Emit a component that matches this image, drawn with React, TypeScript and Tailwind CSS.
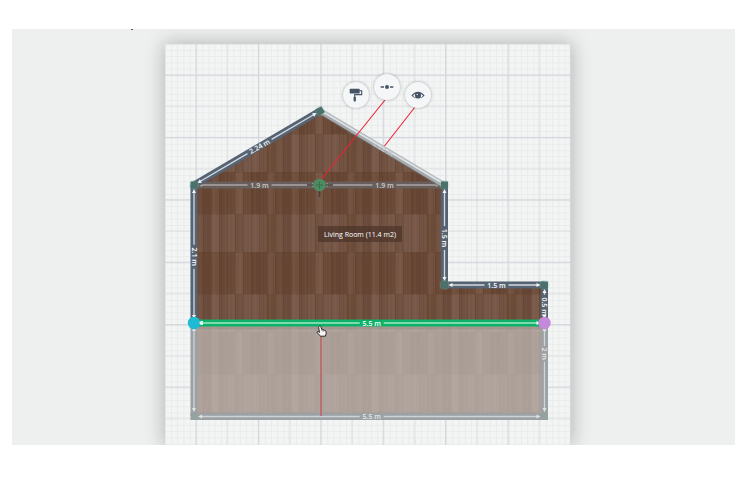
import React from "react";

const FONT = "font-['Open_Sans','Noto_Sans',sans-serif]";

type Tone = "solid" | "ghost" | "inner" | "green";

const wallColor: Record<Tone, string> = {
  solid: "#566373",
  ghost: "#9ba1a5",
  inner: "#685f5c",
  green: "#0bb267",
};

const lineColor: Record<Tone, string> = {
  solid: "#d5dadf",
  ghost: "#d0d4d6",
  inner: "#aaa5a3",
  green: "#a5e6c6",
};

interface WallProps {
  from: [number, number];
  to: [number, number];
  label?: string;
  tone?: Tone;
  at?: number;
}

// A wall with its dimension line; the line breaks around the length label.
function Wall({ from, to, label, tone = "solid", at = 0.5 }: WallProps) {
  const dx = to[0] - from[0];
  const dy = to[1] - from[1];
  const length = Math.hypot(dx, dy);
  const angle = (Math.atan2(dy, dx) * 180) / Math.PI;
  const middle = length * at;
  const gap = label ? label.length * 2 + 2 : 0;
  const stroke = lineColor[tone];
  return (
    <g transform={`translate(${from[0]} ${from[1]}) rotate(${angle})`}>
      <rect x={0} y={-3.5} width={length} height={7} fill={wallColor[tone]} />
      <path
        d={`M6 0H${Math.max(6, middle - gap)}M${Math.min(length - 6, middle + gap)} 0H${length - 6}`}
        stroke={stroke}
        strokeWidth={1.3}
      />
      <path
        d={`M4 0l4-2v4zM${length - 4} 0l-4-2v4z`}
        fill={tone === "inner" ? stroke : tone === "ghost" ? "#dfe3e2" : "#f4f6f6"}
      />
      {label && (
        <text
          x={middle}
          y={2.5}
          textAnchor="middle"
          className={`text-[7px] font-semibold ${FONT}`}
          fill={tone === "inner" ? "#d0cac7" : tone === "ghost" ? "#e6e8e8" : "#ffffff"}
        >
          {label}
        </text>
      )}
    </g>
  );
}

function Corner({ x, y, ghost = false }: { x: number; y: number; ghost?: boolean }) {
  return (
    <g>
      {!ghost && <circle cx={x} cy={y} r={5} fill="#74c795" opacity={0.28} />}
      <rect x={x - 3.5} y={y - 3.5} width={7} height={7} fill={ghost ? "#94a39e" : "#4c716d"} />
    </g>
  );
}

const upperPlanks = ["#6c4c3c", "#7a5b4b", "#70503e", "#77594a", "#70503f", "#77594a", "#775848", "#735341", "#6d4c3a", "#725241"];
const lowerPlanks = ["#674533", "#704f3d", "#684634", "#6c4a38", "#765645", "#6e4c3a", "#674533", "#694735", "#725140", "#6b4937"];

function Patterns() {
  return (
    <defs>
      <pattern id="minor" x="196" y="75" width="6.25" height="6.25" patternUnits="userSpaceOnUse">
        <path d="M0 .5H6.25M.5 0V6.25" stroke="#e9ebeb" />
      </pattern>
      <pattern id="major" x="195.5" y="74.5" width="62.4" height="62.4" patternUnits="userSpaceOnUse">
        <path d="M0 31.7H62.4M31.7 0V62.4" stroke="#dbdddf" />
        <path d="M0 .6H62.4M.6 0V62.4" stroke="#d2d5dc" strokeWidth="1.2" />
      </pattern>
      <pattern id="wood" x="203" y="214" width="80" height="80" patternUnits="userSpaceOnUse">
        {upperPlanks.map((fill, i) => (
          <rect key={i} x={i * 8} y={0} width={8} height={38} fill={fill} />
        ))}
        {lowerPlanks.map((fill, i) => (
          <rect key={i} x={i * 8} y={38} width={8} height={42} fill={fill} />
        ))}
        {upperPlanks.map((_, i) => (
          <path key={i} d={`M${i * 8 + 0.5} 0V80`} stroke="#4a2b1c" opacity=".22" />
        ))}
        <path d="M11 0V80M22.5 0V80M37 0V80M52 0V80M67 0V80M77 0V80" stroke="#a58572" opacity=".12" />
        <path d="M5.5 0V80M18.5 0V80M28.5 0V80M45 0V80M60.5 0V80M70.5 0V80" stroke="#4a2c1d" opacity=".12" />
        {upperPlanks.map((_, i) => (
          <path
            key={i}
            d={`M${i * 8} ${14 + (i % 3) * 3}l8-5m-8 9l8-5m-8 9l8-5m-8 ${24 + (i % 4) * 3}l8-5m-8 9l8-5m-8 9l8-5`}
            stroke="#4a2c1d"
            strokeWidth=".5"
            opacity=".12"
          />
        ))}
        <path d="M0 .5H80M0 38.5H80" stroke="#513324" strokeWidth=".6" opacity=".25" />
      </pattern>
    </defs>
  );
}

function HandCursor() {
  return (
    <g transform="translate(316 325)" strokeLinejoin="round">
      <path
        d="M3.2 1.3c.9-.5 1.6 0 1.8.8l.8 2.4c.5-.4 1.2-.2 1.4.4.5-.4 1.2-.1 1.4.5.7-.2 1.2.1 1.3.8l.3 2.2-.9 2.8H4.7L1 7.6c-.4-.8.4-1.4 1.2-1l1.3.8L2.6 2.4c-.1-.5.1-.9.6-1.1Z"
        fill="#f5f5f3"
        stroke="#2c2927"
        strokeWidth="1"
      />
      <path d="M5.8 4.5l.4 1.7M7.3 5l.3 1.5" stroke="#2c2927" strokeWidth=".6" />
    </g>
  );
}

function FloorPlan() {
  return (
    <svg viewBox="165 44 406 401" className="block h-auto w-full" role="img" aria-label="Living Room floor plan">
      <Patterns />
      <rect x="165" y="44" width="406" height="401" fill="#f3f5f4" />
      <rect x="165" y="44" width="406" height="401" fill="url(#minor)" />
      <rect x="165" y="44" width="406" height="401" fill="url(#major)" />

      <path d="M194 185L320 111L444 185V285H544V323H194Z" fill="url(#wood)" />
      <path d="M194 323H544V416H194Z" fill="url(#wood)" />
      <path d="M194 323H544V416H194Z" fill="#d3d4d2" opacity=".62" />
      <path d="M197 328H541" stroke="#958580" strokeWidth="3" opacity=".4" />

      <Wall from={[194, 323]} to={[194, 416]} tone="ghost" />
      <Wall from={[544.5, 323]} to={[544.5, 416]} label="2 m" tone="ghost" at={0.33} />
      <Wall from={[194, 416.5]} to={[544.5, 416.5]} label="5.5 m" tone="ghost" at={0.507} />
      <Corner x={194} y={416.5} ghost />
      <Corner x={544.5} y={416.5} ghost />

      <Wall from={[194, 185]} to={[320, 185]} label="1.9 m" tone="inner" at={0.52} />
      <Wall from={[320, 185]} to={[444, 185]} label="1.9 m" tone="inner" at={0.52} />
      <g opacity=".9">
        <path d="M320 111L444 185" stroke="#abb3b9" strokeWidth="6" />
        <path d="M323 112L444 184" stroke="#dce0e2" strokeWidth="2" />
        <path d="M320 114.5L441 187" stroke="#6b6867" strokeWidth="1" />
      </g>
      <text
        transform="translate(382 151) rotate(31)"
        textAnchor="middle"
        className={`text-[7px] font-semibold ${FONT}`}
        fill="#c9c6c5"
      >
        2.22 m
      </text>

      <Wall from={[194, 185]} to={[320, 111]} label="2.24 m" at={0.52} />
      <Wall from={[194, 185]} to={[194, 323]} label="2.1 m" at={0.52} />
      <Wall from={[444.5, 185]} to={[444.5, 285]} label="1.5 m" at={0.53} />
      <Wall from={[444.5, 285]} to={[544.5, 285]} label="1.5 m" at={0.52} />
      <Wall from={[544.5, 285]} to={[544.5, 323]} label="0.5 m" at={0.57} />
      <Corner x={194} y={185} />
      <g transform="rotate(-30 320 111)">
        <Corner x={320} y={111} />
      </g>
      <Corner x={444.5} y={185} />
      <Corner x={444.5} y={285} />
      <Corner x={544.5} y={285} />

      <Wall from={[194, 323]} to={[544.5, 323]} label="5.5 m" tone="green" at={0.507} />
      <circle cx="194" cy="323" r="6.2" fill="#1fbbd5" />
      <path d="M199 323l2-2h2v4h-2z" fill="#dff5ee" />
      <circle cx="544.5" cy="323" r="6.2" fill="#c489d8" />

      <path d="M321 330V416" stroke="#bd5f63" strokeWidth="1.5" />
      <path d="M307 185H333M319.5 185V197" stroke="#47413d" strokeWidth="1.5" />
      <circle cx="319.5" cy="185" r="6.3" fill="#4d8b60" />
      <path d="M316 185H323M319.5 181.5V188.5" stroke="#3b714d" strokeWidth="1" />
      <path d="M385 100L321.5 179M415 107L384.5 146" stroke="#ee2237" strokeWidth="1.1" />
      <HandCursor />

      <rect x="318" y="226" width="84" height="16" fill="#4c3429" opacity=".72" />
      <text x="360" y="237" textAnchor="middle" className={`text-[7px] font-medium ${FONT}`} fill="#ffffff">
        Living Room (11.4 m2)
      </text>
    </svg>
  );
}

interface ToolProps {
  label: string;
  place: string;
  children: React.ReactNode;
}

// Round action that floats above the selected wall.
function Tool({ label, place, children }: ToolProps) {
  return (
    <button
      type="button"
      aria-label={label}
      className={`absolute ${place} flex size-[26px] items-center justify-center rounded-full bg-[#f4f6f7] text-[#465466] shadow-[0_0_3px_rgba(70,75,85,0.45)]`}
    >
      {children}
    </button>
  );
}

export default function App() {
  return (
    <div className="flex min-h-screen flex-col bg-white pt-[29px] pr-[15px] pb-8 pl-3">
      <main className="relative flex flex-1 justify-center overflow-hidden bg-[#eef0ef] pt-[15px] pr-[11px]">
        <span className="absolute top-0 left-[119px] h-px w-[2px] bg-[#555a59]" />
        <section className="relative w-[406px] max-w-full self-start shadow-[0_0_18px_1px_rgba(0,0,0,0.25)]">
          <FloorPlan />
          <Tool label="Paint wall" place="top-[38px] left-[178px]">
            <svg viewBox="0 0 14 14" className="size-[14px]" fill="none">
              <rect x=".7" y=".8" width="10" height="4.6" rx=".7" fill="currentColor" />
              <path d="M10.5 2.8H12.7V6.6H5.7V9.3" stroke="currentColor" strokeWidth="1.1" />
              <rect x="4.6" y="8.8" width="2.3" height="4.8" rx=".8" fill="currentColor" />
            </svg>
          </Tool>
          <Tool label="Split wall" place="top-[30px] left-[209px]">
            <svg viewBox="0 0 14 14" className="size-[14px]" fill="none">
              <path d="M.7 7H4M10 7H13.3" stroke="currentColor" strokeWidth="1.5" />
              <circle cx="7" cy="7" r="2" fill="currentColor" />
            </svg>
          </Tool>
          <Tool label="Hide wall" place="top-[38px] left-[240px]">
            <svg viewBox="0 0 14 14" className="size-[14px]" fill="none">
              <path d="M.4 7.6C3.8 2.4 10.2 2.4 13.6 7.6C10.2 11.6 3.8 11.6.4 7.6Z" fill="currentColor" />
              <path d="M2 7.7C2.8 6.7 3.4 6.2 4.2 5.8C3.7 7.2 3.9 8.6 4.7 9.7C3.6 9.2 2.7 8.6 2 7.7ZM12 7.7C11.2 6.7 10.6 6.2 9.8 5.8C10.3 7.2 10.1 8.6 9.3 9.7C10.4 9.2 11.3 8.6 12 7.7Z" fill="#f4f6f7" />
              <circle cx="6.2" cy="6.4" r=".7" fill="#f4f6f7" />
            </svg>
          </Tool>
        </section>
      </main>
    </div>
  );
}
